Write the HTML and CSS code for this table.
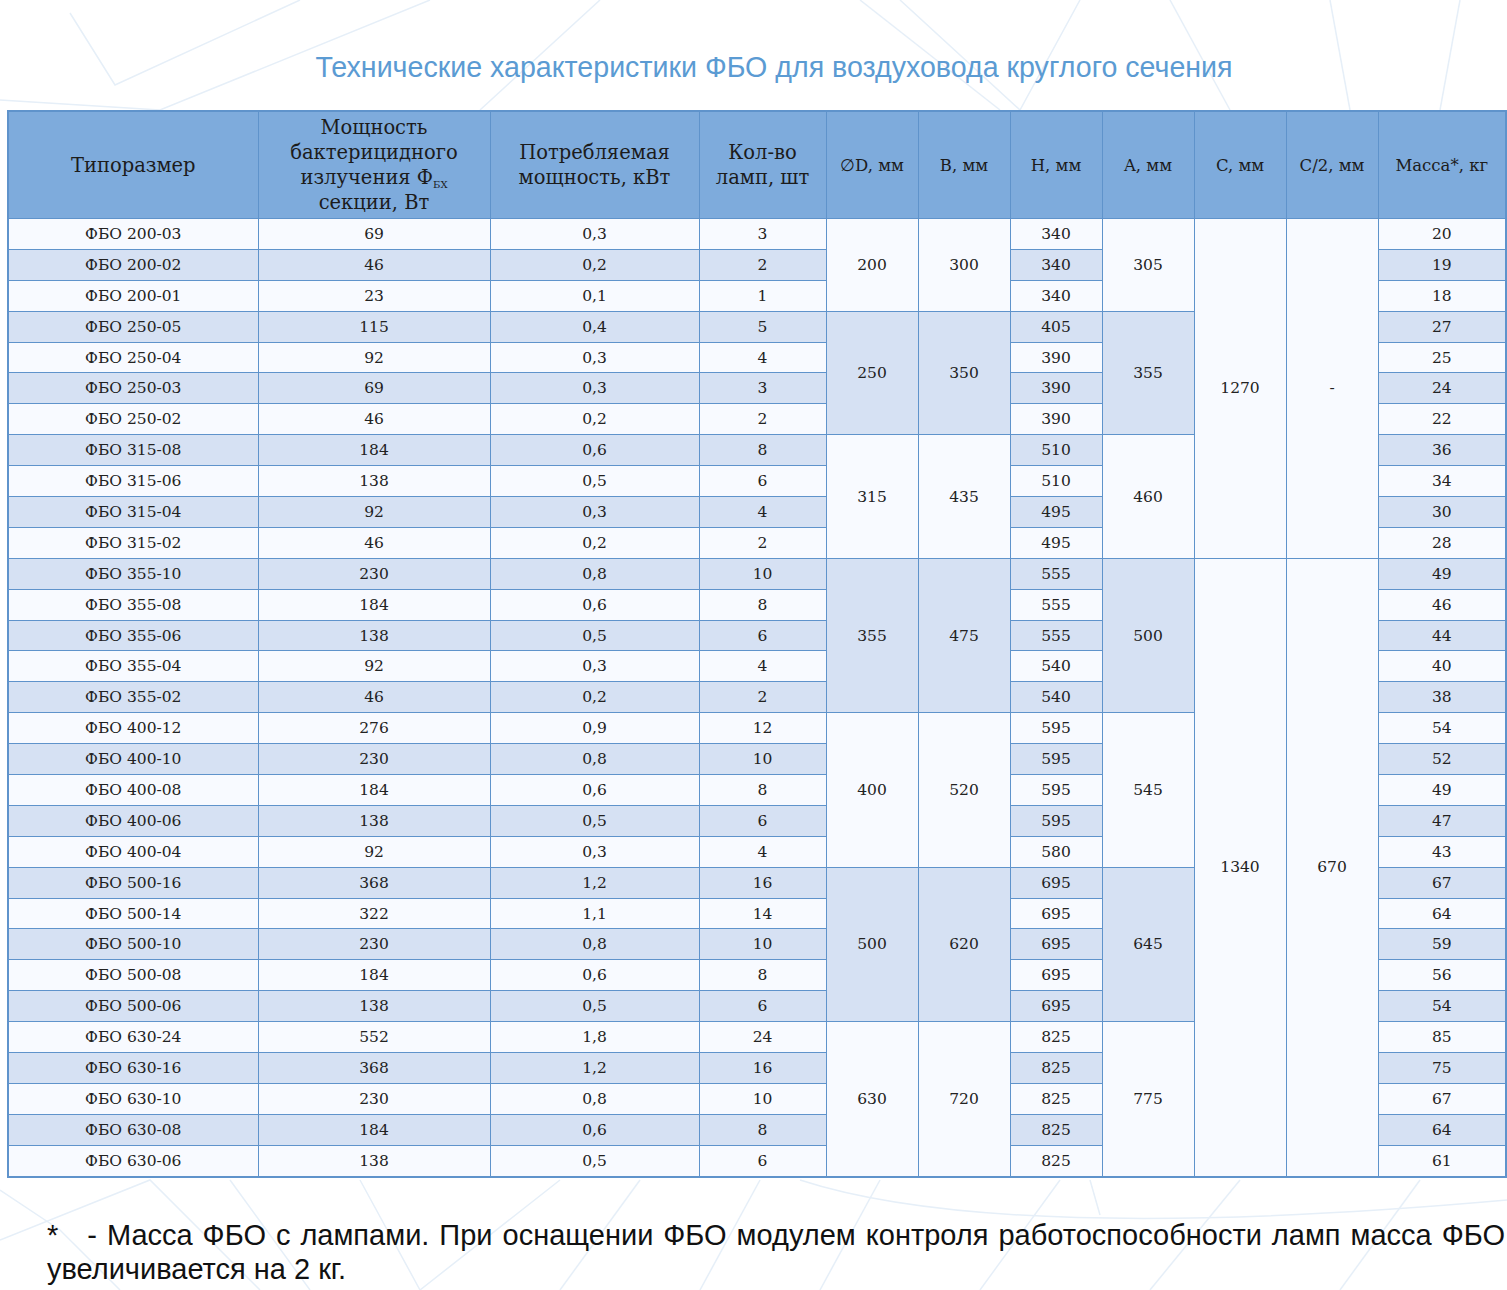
FILE: index.html
```html
<!DOCTYPE html>
<html lang="ru">
<head>
<meta charset="utf-8">
<title>Технические характеристики ФБО</title>
<link rel="stylesheet" href="styles.css">
</head>
<body>
<svg class="bg" width="1507" height="1290" viewBox="0 0 1507 1290" aria-hidden="true">
  <g fill="none" stroke="#e6eff8" stroke-width="1.5">
    <polyline points="70,13 115,85 300,0"/>
    <polyline points="0,100 160,110 430,0"/>
    <polyline points="860,0 1000,110"/>
    <polyline points="900,0 1020,110 1080,0"/>
    <polyline points="1170,0 1230,110"/>
    <polyline points="1330,0 1350,110"/>
    <polyline points="1460,0 1440,110"/>
    <polyline points="600,0 480,110"/>
    <polyline points="0,1190 60,1230 120,1290"/>
    <polyline points="0,1240 150,1180 260,1290"/>
    <polyline points="230,1180 310,1290"/>
    <polyline points="360,1180 420,1290 560,1180"/>
    <polyline points="640,1180 560,1290"/>
    <polyline points="760,1180 700,1290"/>
    <polyline points="880,1180 820,1290"/>
    <polyline points="1060,1180 980,1290"/>
    <polyline points="1240,1180 1150,1290"/>
    <polyline points="1420,1180 1340,1290"/>
    <path d="M800,1180 Q1000,1245 1507,1200"/>
    <polyline points="1090,1180 1100,1215"/>
  </g>
</svg>
<div class="page">
  <h1 class="title">Технические характеристики ФБО для воздуховода круглого сечения</h1>
  <table class="spec">
    <colgroup>
      <col class="c-name"><col class="c-power"><col class="c-kw"><col class="c-lamps">
      <col class="c-s"><col class="c-s"><col class="c-s"><col class="c-s"><col class="c-s"><col class="c-s">
      <col class="c-mass">
    </colgroup>
    <thead>
      <tr>
        <th>Типоразмер</th>
        <th>Мощность<br>бактерицидного<br>излучения Ф<sub>БХ</sub><br>секции, Вт</th>
        <th>Потребляемая<br>мощность, кВт</th>
        <th>Кол-во<br>ламп, шт</th>
        <th class="sm">∅D, мм</th>
        <th class="sm">B, мм</th>
        <th class="sm">H, мм</th>
        <th class="sm">A, мм</th>
        <th class="sm">C, мм</th>
        <th class="sm">C/2, мм</th>
        <th class="sm">Масса*, кг</th>
      </tr>
    </thead>
    <tbody>
      <tr><td>ФБО 200-03</td><td>69</td><td>0,3</td><td>3</td><td rowspan="3" class="gw">200</td><td rowspan="3" class="gw">300</td><td>340</td><td rowspan="3" class="gw">305</td><td rowspan="11" class="gw">1270</td><td rowspan="11" class="gw">-</td><td>20</td></tr>
      <tr class="alt"><td>ФБО 200-02</td><td>46</td><td>0,2</td><td>2</td><td>340</td><td>19</td></tr>
      <tr><td>ФБО 200-01</td><td>23</td><td>0,1</td><td>1</td><td>340</td><td>18</td></tr>
      <tr class="alt"><td>ФБО 250-05</td><td>115</td><td>0,4</td><td>5</td><td rowspan="4" class="gb">250</td><td rowspan="4" class="gb">350</td><td>405</td><td rowspan="4" class="gb">355</td><td>27</td></tr>
      <tr><td>ФБО 250-04</td><td>92</td><td>0,3</td><td>4</td><td>390</td><td>25</td></tr>
      <tr class="alt"><td>ФБО 250-03</td><td>69</td><td>0,3</td><td>3</td><td>390</td><td>24</td></tr>
      <tr><td>ФБО 250-02</td><td>46</td><td>0,2</td><td>2</td><td>390</td><td>22</td></tr>
      <tr class="alt"><td>ФБО 315-08</td><td>184</td><td>0,6</td><td>8</td><td rowspan="4" class="gw">315</td><td rowspan="4" class="gw">435</td><td>510</td><td rowspan="4" class="gw">460</td><td>36</td></tr>
      <tr><td>ФБО 315-06</td><td>138</td><td>0,5</td><td>6</td><td>510</td><td>34</td></tr>
      <tr class="alt"><td>ФБО 315-04</td><td>92</td><td>0,3</td><td>4</td><td>495</td><td>30</td></tr>
      <tr><td>ФБО 315-02</td><td>46</td><td>0,2</td><td>2</td><td>495</td><td>28</td></tr>
      <tr class="alt"><td>ФБО 355-10</td><td>230</td><td>0,8</td><td>10</td><td rowspan="5" class="gb">355</td><td rowspan="5" class="gb">475</td><td>555</td><td rowspan="5" class="gb">500</td><td rowspan="20" class="gw">1340</td><td rowspan="20" class="gw">670</td><td>49</td></tr>
      <tr><td>ФБО 355-08</td><td>184</td><td>0,6</td><td>8</td><td>555</td><td>46</td></tr>
      <tr class="alt"><td>ФБО 355-06</td><td>138</td><td>0,5</td><td>6</td><td>555</td><td>44</td></tr>
      <tr><td>ФБО 355-04</td><td>92</td><td>0,3</td><td>4</td><td>540</td><td>40</td></tr>
      <tr class="alt"><td>ФБО 355-02</td><td>46</td><td>0,2</td><td>2</td><td>540</td><td>38</td></tr>
      <tr><td>ФБО 400-12</td><td>276</td><td>0,9</td><td>12</td><td rowspan="5" class="gw">400</td><td rowspan="5" class="gw">520</td><td>595</td><td rowspan="5" class="gw">545</td><td>54</td></tr>
      <tr class="alt"><td>ФБО 400-10</td><td>230</td><td>0,8</td><td>10</td><td>595</td><td>52</td></tr>
      <tr><td>ФБО 400-08</td><td>184</td><td>0,6</td><td>8</td><td>595</td><td>49</td></tr>
      <tr class="alt"><td>ФБО 400-06</td><td>138</td><td>0,5</td><td>6</td><td>595</td><td>47</td></tr>
      <tr><td>ФБО 400-04</td><td>92</td><td>0,3</td><td>4</td><td>580</td><td>43</td></tr>
      <tr class="alt"><td>ФБО 500-16</td><td>368</td><td>1,2</td><td>16</td><td rowspan="5" class="gb">500</td><td rowspan="5" class="gb">620</td><td>695</td><td rowspan="5" class="gb">645</td><td>67</td></tr>
      <tr><td>ФБО 500-14</td><td>322</td><td>1,1</td><td>14</td><td>695</td><td>64</td></tr>
      <tr class="alt"><td>ФБО 500-10</td><td>230</td><td>0,8</td><td>10</td><td>695</td><td>59</td></tr>
      <tr><td>ФБО 500-08</td><td>184</td><td>0,6</td><td>8</td><td>695</td><td>56</td></tr>
      <tr class="alt"><td>ФБО 500-06</td><td>138</td><td>0,5</td><td>6</td><td>695</td><td>54</td></tr>
      <tr><td>ФБО 630-24</td><td>552</td><td>1,8</td><td>24</td><td rowspan="5" class="gw">630</td><td rowspan="5" class="gw">720</td><td>825</td><td rowspan="5" class="gw">775</td><td>85</td></tr>
      <tr class="alt"><td>ФБО 630-16</td><td>368</td><td>1,2</td><td>16</td><td>825</td><td>75</td></tr>
      <tr><td>ФБО 630-10</td><td>230</td><td>0,8</td><td>10</td><td>825</td><td>67</td></tr>
      <tr class="alt"><td>ФБО 630-08</td><td>184</td><td>0,6</td><td>8</td><td>825</td><td>64</td></tr>
      <tr><td>ФБО 630-06</td><td>138</td><td>0,5</td><td>6</td><td>825</td><td>61</td></tr>
    </tbody>
  </table>
  <p class="note">*&#8195;- Масса ФБО с лампами. При оснащении ФБО модулем контроля работоспособности ламп масса ФБО увеличивается на 2 кг.</p>
</div>
</body>
</html>
```

FILE: styles.css
```css
html, body {
  margin: 0;
  padding: 0;
  background: #ffffff;
}
body {
  position: relative;
  width: 1507px;
  height: 1290px;
  overflow: hidden;
}
.bg {
  position: absolute;
  left: 0;
  top: 0;
  z-index: 0;
}
.page {
  position: relative;
  z-index: 1;
  display: flex;
  flex-direction: column;
  padding: 0 2px 0 7px;
}
.title {
  margin: 52px 0 0 0;
  height: 58px;
  padding-left: 36px;
  font-family: "Liberation Sans", Arial, sans-serif;
  font-weight: normal;
  font-size: 28.6px;
  line-height: 30px;
  color: #5b9bd3;
  text-align: center;
}
.spec {
  border-collapse: collapse;
  table-layout: fixed;
  width: 1498px;
  font-family: "DejaVu Serif", "Liberation Serif", serif;
  color: #1a1a1a;
  border: 2px solid #5f93cb;
}
.c-name { width: 250px; }
.c-power { width: 232px; }
.c-kw { width: 209px; }
.c-lamps { width: 127px; }
.c-s { width: 92px; }
.c-mass { width: 128px; }
.spec th {
  background: #7eabdc;
  font-weight: normal;
  font-size: 19.5px;
  line-height: 25px;
  height: 106px;
  padding: 0 4px;
  border: 1px solid #5f93cb;
  text-align: center;
  vertical-align: middle;
  color: #1c1c1c;
  white-space: nowrap;
}
.spec th.sm {
  font-size: 16.5px;
  padding: 0 2px;
}
.spec th sub {
  font-size: 10px;
  line-height: 0;
  vertical-align: -4px;
}
.spec td {
  height: 29.9px;
  padding: 0;
  border: 1px solid #5f93cb;
  background: #f8faff;
  text-align: center;
  vertical-align: middle;
  font-size: 15.5px;
  line-height: 20px;
  color: #222222;
}
.spec tr.alt td {
  background: #d6e1f3;
}
.spec td.gw, .spec tr.alt td.gw {
  background: #f8faff;
}
.spec td.gb, .spec tr.alt td.gb {
  background: #d6e1f3;
}
.note {
  margin: 40px 0 0 40px;
  font-family: "Liberation Sans", Arial, sans-serif;
  font-size: 29px;
  line-height: 34px;
  color: #111111;
  text-align: justify;
}
```
